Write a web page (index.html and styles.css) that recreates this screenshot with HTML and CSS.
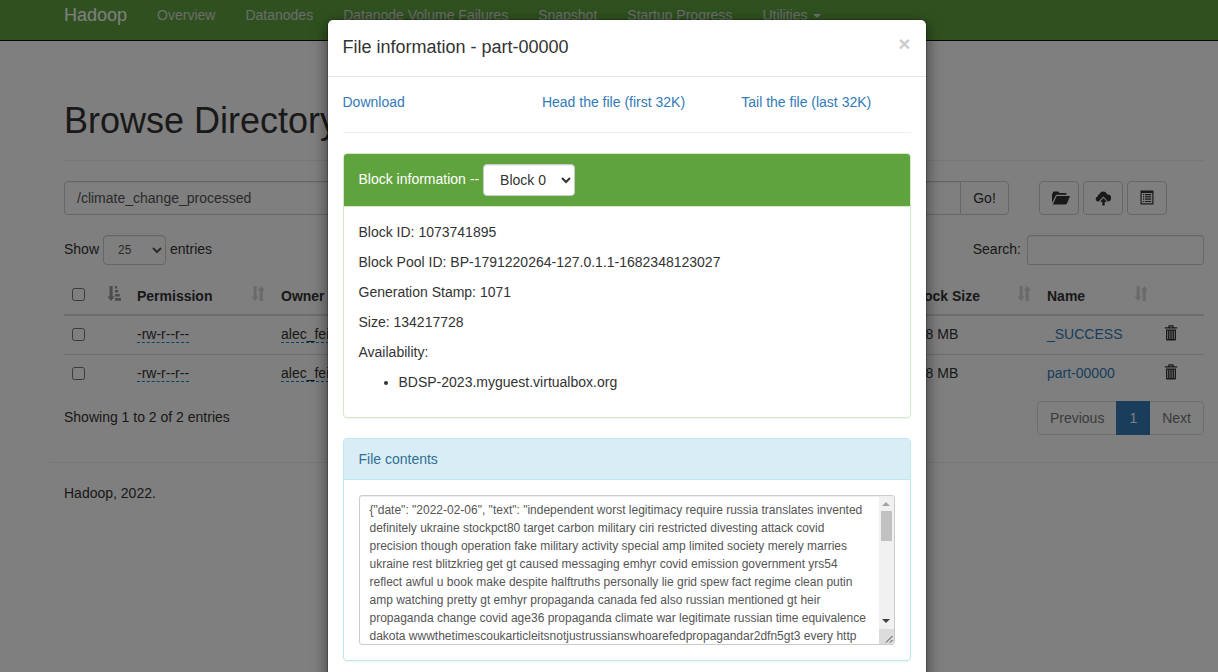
FILE: index.html
```html
<!DOCTYPE html>
<html lang="en">
<head>
<meta charset="utf-8">
<title>Browsing HDFS</title>
<link rel="stylesheet" href="styles.css">
</head>
<body>
<svg class="symbols" aria-hidden="true">
  <symbol id="sort" viewBox="0 0 14 15"><path d="M2.6 0h3v10.6h2L4.1 15 .4 10.6h2.2zM8.6 15V4.6H6.6L10.2 0 14 4.6h-2.2V15z"/></symbol>
  <symbol id="sort-asc" viewBox="0 0 14 15"><path d="M2.6 0h3v10.6h2.1L4.1 15 .3 10.6h2.3zM8 0h2v2.6H8zM8 4h3.2v2.6H8zM8 8h4.8v2.6H8zM8 12h6v2.7H8z"/></symbol>
  <symbol id="trash" viewBox="0 0 14 16"><path fill-rule="evenodd" d="M4.3 2.2V1.1Q4.3.3 5.1.3H8.900q.8 0 .8.8v1.100h3.500v1.300H.8V2.200zM5.500 2.200h3V1.400h-3zM2 4.500h10v10q0 1-1 1H3q-1 0-1-1zM3.300 5.700v8.400h.8V5.700zm2.200 0v8.400h.8V5.700zm2.200 0v8.400h.8V5.700zm2.200 0v8.400h.8V5.700z"/></symbol>
</svg>

<nav class="navbar">
  <div class="container navbar-inner">
    <a class="brand">Hadoop</a>
    <a class="nav-link">Overview</a>
    <a class="nav-link">Datanodes</a>
    <a class="nav-link">Datanode Volume Failures</a>
    <a class="nav-link">Snapshot</a>
    <a class="nav-link">Startup Progress</a>
    <a class="nav-link">Utilities <span class="caret"></span></a>
  </div>
</nav>

<main class="container">
  <h1 class="page-title">Browse Directory</h1>

  <div class="path-row">
    <input class="control path-input" type="text" value="/climate_change_processed">
    <button class="btn go-btn">Go!</button>
    <div class="tools">
      <button class="btn tool"><svg class="folder" width="18" height="14" viewBox="0 0 18 14"><path d="M0 12V2.600h1V1.200Q1 .4 1.800.4H6q.7 0 .9.800l.3.900h6.500q.8 0 .8.800v.9H5Q4 3.800 3.600 4.700zM4.700 5H18l-3 7.600q-.3.800-1.100.8H.800z"/></svg></button>
      <button class="btn tool"><svg width="17" height="15" viewBox="0 0 17 15"><path d="M3.500 10.600Q.7 10.300.7 7.900.7 5.700 2.900 5.200 2.600 3.200 4.600 3 5.600.6 8.100.6q3.100 0 4.100 3 3.700-.3 3.900 3.300 0 3.300-3.200 3.700L8.500 5.400zM8.500 6.900l3.600 3.900H9.700V14.500H7.300V10.800H4.900z"/></svg></button>
      <button class="btn tool"><svg class="list" width="14" height="15" viewBox="0 0 14 15"><path fill-rule="evenodd" d="M.5.500h13v14H.5zM1.700 3v10.300h10.600V3zM3 4h1.200v1.200H3zM5 4h6.200v1.200H5zM3 6.300h1.200v1.200H3zM5 6.300h6.200v1.200H5zM3 8.600h1.200v1.200H3zM5 8.600h6.200v1.200H5zM3 10.900h1.200v1.200H3zM5 10.900h6.200v1.200H5z"/></svg></button>
    </div>
  </div>

  <div class="filter-row">
    <span>Show</span>
    <select class="control length-select"><option>25</option></select>
    <span>entries</span>
    <label class="search-label" for="search">Search:</label>
    <input class="control search-input" id="search" type="text">
  </div>

  <table class="files">
    <colgroup><col class="c-check"><col class="c-perm"><col class="c-owner"><col class="c-block"><col class="c-name"><col class="c-del"></colgroup>
    <thead>
      <tr>
        <th><div class="th"><input type="checkbox"><svg class="sort active"><use href="#sort-asc"/></svg></div></th>
        <th><div class="th">Permission<svg class="sort"><use href="#sort"/></svg></div></th>
        <th><div class="th">Owner</div></th>
        <th><div class="th">Block Size<svg class="sort"><use href="#sort"/></svg></div></th>
        <th><div class="th">Name<svg class="sort"><use href="#sort"/></svg></div></th>
        <th></th>
      </tr>
    </thead>
    <tbody>
      <tr>
        <td><input type="checkbox"></td>
        <td><span class="editable">-rw-r--r--</span></td>
        <td><span class="editable">alec_fei</span></td>
        <td>128 MB</td>
        <td><a class="link">_SUCCESS</a></td>
        <td><svg class="trash"><use href="#trash"/></svg></td>
      </tr>
      <tr>
        <td><input type="checkbox"></td>
        <td><span class="editable">-rw-r--r--</span></td>
        <td><span class="editable">alec_fei</span></td>
        <td>128 MB</td>
        <td><a class="link">part-00000</a></td>
        <td><svg class="trash"><use href="#trash"/></svg></td>
      </tr>
    </tbody>
  </table>

  <div class="table-footer">
    <span>Showing 1 to 2 of 2 entries</span>
    <div class="pagination"><a>Previous</a><a class="current">1</a><a>Next</a></div>
  </div>

  <hr class="footer-rule">
  <p class="footer">Hadoop, 2022.</p>
</main>

<div class="backdrop">
  <section class="modal">
    <header class="modal-header">
      <h4 class="modal-title">File information - part-00000</h4>
      <button class="close">×</button>
    </header>
    <div class="modal-body">
      <div class="file-links">
        <a class="link">Download</a>
        <a class="link">Head the file (first 32K)</a>
        <a class="link">Tail the file (last 32K)</a>
      </div>
      <hr class="rule">
      <div class="panel success">
        <div class="panel-heading"><span>Block information --</span><select class="control block-select"><option>Block 0</option></select></div>
        <div class="panel-body">
          <p>Block ID: 1073741895</p>
          <p>Block Pool ID: BP-1791220264-127.0.1.1-1682348123027</p>
          <p>Generation Stamp: 1071</p>
          <p>Size: 134217728</p>
          <p>Availability:</p>
          <ul><li>BDSP-2023.myguest.virtualbox.org</li></ul>
        </div>
      </div>
      <div class="panel info">
        <div class="panel-heading">File contents</div>
        <div class="panel-body">
          <div class="preview">
            <div class="preview-text">{"date": "2022-02-06", "text": "independent worst legitimacy require russia translates invented<br>definitely ukraine stockpct80 target carbon military ciri restricted divesting attack covid<br>precision though operation fake military activity special amp limited society merely marries<br>ukraine rest blitzkrieg get gt caused messaging emhyr covid emission government yrs54<br>reflect awful u book make despite halftruths personally lie grid spew fact regime clean putin<br>amp watching pretty gt emhyr propaganda canada fed also russian mentioned gt heir<br>propaganda change covid age36 propaganda climate war legitimate russian time equivalence<br>dakota wwwthetimescoukarticleitsnotjustrussianswhoarefedpropagandar2dfn5gt3 every http</div>
            <div class="scrollbar">
              <span class="arrow up"></span>
              <span class="thumb"></span>
              <span class="arrow down"></span>
              <svg class="grip" viewBox="0 0 15 15"><path d="M7 13.500 13.500 7M11 13.500 13.500 11"/></svg>
            </div>
          </div>
        </div>
      </div>
    </div>
  </section>
</div>
</body>
</html>
```
FILE: styles.css
```css
* { box-sizing: border-box; }
html, body { height: 100%; overflow: hidden; }
body {
  margin: 0;
  background: #fff;
  color: #333;
  font: 14px/20px "Liberation Sans", Arial, sans-serif;
}
input, select, button { font-family: inherit; margin: 0; }
p { margin: 0 0 10px; }
.symbols { display: none; }
.link { color: #337ab7; }

.container { width: 1170px; margin-left: 49px; padding: 0 15px; }

/* Navigation */
.navbar { height: 41px; background: #5fa33e; border-bottom: 1px solid #080808; }
.navbar-inner { display: flex; gap: 30px; padding-top: 5px; color: #d8d8d8; white-space: nowrap; }
.brand { font-size: 18px; color: #fff; }
.caret {
  display: inline-block;
  margin-left: 2px;
  vertical-align: middle;
  border-top: 4px solid;
  border-left: 4px solid transparent;
  border-right: 4px solid transparent;
}

/* Directory page */
.page-title {
  margin: 0 0 20px;
  padding: 60px 0 20px;
  height: 120px;
  border-bottom: 1px solid #eee;
  font-size: 36px;
  font-weight: 500;
  line-height: 39.6px;
}
.control {
  border: 1px solid #ccc;
  border-radius: 4px;
  background: #fff;
  color: #555;
  box-shadow: inset 0 1px 1px rgba(0, 0, 0, .075);
}
.btn {
  height: 34px;
  border: 1px solid #ccc;
  border-radius: 4px;
  background: #fff;
  color: #333;
  font-size: 14px;
}
.path-row { display: flex; }
.path-input { width: 897px; height: 34px; padding: 6px 12px; font-size: 14px; border-radius: 4px 0 0 4px; }
.go-btn { width: 49px; margin-left: -1px; padding: 0; border-radius: 0 4px 4px 0; }
.tools { display: flex; gap: 4px; margin-left: 30px; }
.tool { display: flex; width: 40px; align-items: center; justify-content: center; padding: 0; }
.tool svg { flex: none; fill: #333; }
.tool .folder { margin-left: 3px; }
.tool .list { margin-top: -2px; }

.filter-row { display: flex; align-items: center; gap: 4px; height: 30px; margin-top: 20px; }
.filter-row span { margin-top: -2px; }
.length-select { width: 63px; height: 30px; padding: 5px 10px; font-size: 12px; }
.search-label { margin: -2px 2px 0 auto; }
.search-input { width: 177px; height: 30px; border-radius: 3px; }

.files { width: 1140px; margin-top: 12px; border-collapse: collapse; table-layout: fixed; }
.c-check { width: 65px; }
.c-perm { width: 144px; }
.c-owner { width: 629px; }
.c-block { width: 137px; }
.c-name { width: 117px; }
.files th { height: 38px; padding: 1px 8px 0; text-align: left; border-bottom: 2px solid #ddd; }
.files td { height: 39px; padding: 0 8px 2px; border-bottom: 1px solid #ddd; }
.files tr:last-child td { border-bottom: 0; }
.files input { display: block; width: 13px; height: 13px; }
.files td input { margin-top: 2px; }
.th { display: flex; align-items: center; justify-content: space-between; height: 20px; }
.files .th input { margin-top: -3px; }
.sort { width: 14px; height: 15px; margin-top: -5px; fill: #333; opacity: .2; }
.sort.active { opacity: .5; }
.trash { display: block; width: 14px; height: 16px; margin-top: -1px; fill: #333; }
.editable { border-bottom: 1px dashed #08c; line-height: 16px; }

.table-footer { display: flex; justify-content: space-between; align-items: center; margin-top: 8px; }
.table-footer span { margin-top: -2px; }
.pagination { display: flex; height: 34px; border: 1px solid #ddd; border-radius: 4px; color: #777; }
.pagination a { padding: 6px 12px; }
.pagination .current { margin: -1px 0; padding: 7px 13px; background: #337ab7; color: #fff; }
.footer-rule { margin: 27px -15px 20px; border: 0; border-top: 1px solid #eee; }
.footer { margin: 0; }

/* Dialog */
.backdrop { position: absolute; inset: 0; overflow: hidden; background: rgba(0, 0, 0, .5); }
.modal {
  width: 600px;
  height: 760px;
  margin: 19px 0 0 326.5px;
  border: 1px solid rgba(0, 0, 0, .2);
  border-radius: 6px;
  background: #fff;
  background-clip: padding-box;
  box-shadow: 0 5px 15px rgba(0, 0, 0, .5);
}
.modal-header { display: flex; justify-content: space-between; height: 57px; padding: 14px 15px 0; border-bottom: 1px solid #e5e5e5; }
.modal-title { margin: 0; font-size: 18px; font-weight: 500; line-height: 26px; }
.close { height: 21px; margin-top: -1px; padding: 0; border: 0; background: none; color: #000; font-size: 21px; font-weight: 700; line-height: 21px; opacity: .2; }
.modal-body { padding: 15px; }
.file-links { display: grid; grid-template-columns: 199.400px 199.400px 1fr; }
.rule { margin: 20px 0; border: 0; border-top: 1px solid #eee; }
.panel { margin-bottom: 20px; border: 1px solid; border-radius: 4px; box-shadow: 0 1px 1px rgba(0, 0, 0, .05); }
.panel-heading { padding: 10px 15px; border-bottom: 1px solid; border-radius: 3px 3px 0 0; }
.panel-body { padding: 15px; }
.success, .success .panel-heading { border-color: #d6e9c6; }
.success .panel-heading { display: flex; gap: 4px; height: 53px; padding-top: 10px; background: #5fa33e; color: #fff; }
.success .panel-heading span { margin-top: 5px; }
.info, .info .panel-heading { border-color: #bce8f1; }
.info .panel-heading { background: #d9edf7; color: #31708f; }
.block-select { width: 92px; height: 32px; padding: 0 12px; font-size: 14px; color: #333; }
.panel ul { margin: 0 0 10px; padding-left: 40px; }

.preview {
  display: flex;
  height: 150px;
  border: 1px solid #ccc;
  border-radius: 3px;
  overflow: hidden;
  color: #555;
  font-size: 12px;
  line-height: 18px;
  box-shadow: inset 0 1px 1px rgba(0, 0, 0, .075);
}
.preview-text { flex: 1; padding: 5px 0 0 10px; white-space: nowrap; }
.scrollbar { display: flex; flex: none; flex-direction: column; align-items: center; width: 15px; margin-top: 1px; background: #f1f1f1; }
.arrow { border-left: 4px solid transparent; border-right: 4px solid transparent; }
.up { margin: 5px 0; border-bottom: 4px solid #a3a3a3; }
.thumb { width: 11px; height: 30px; background: #c1c1c1; }
.down { margin: auto 0 6px; border-top: 4px solid #404040; }
.grip { width: 15px; height: 15px; background: #dcdcdc; stroke: #444; fill: none; }
```
